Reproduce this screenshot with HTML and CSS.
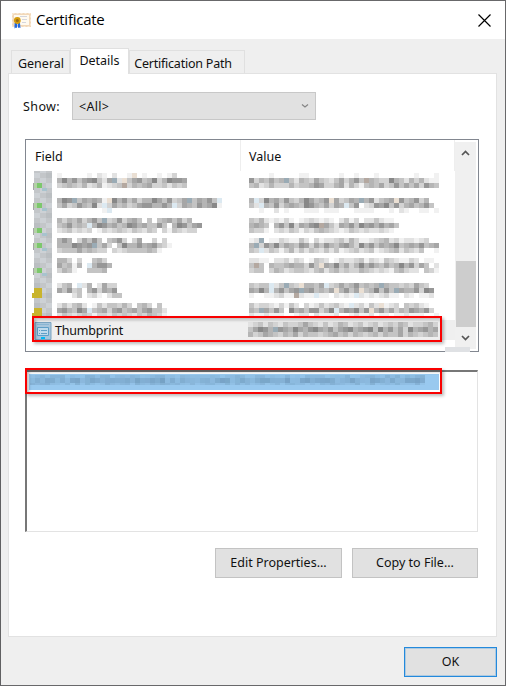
FILE: index.html
```html
<!DOCTYPE html>
<html lang="en">
<head>
<meta charset="utf-8">
<title>Certificate</title>
<link rel="stylesheet" href="styles.css">
</head>
<body>
<div class="window">
  <header class="titlebar">
    <svg class="cert-icon" width="20" height="17" viewBox="0 0 20 17"><path fill="#f2d8b9" d="M1 1h19v14H1z"/><path fill="#fffaf0" d="M3 3h15v10H3z"/><path stroke="#f8ead7" stroke-dasharray="2 2" fill="none" d="M1.500 1.500h18v13h-18z"/><path stroke="#d5d6dd" d="M9 4.500h7M11 7.500h5M11 10.500h4"/><path fill="#2468dc" d="M3.500 11h3l-.5 5-1-.5-1.500 1zM7 11h2l.5 5-1.500-.5-1 .5z"/><circle cx="6.300" cy="8.500" r="3.400" fill="#d49b0c"/><circle cx="6.300" cy="8.500" r="1.500" fill="#976b14"/></svg>
    <span class="title">Certificate</span>
    <svg class="close" width="13" height="13" viewBox="0 0 13 13"><path d="M.5.5l12 12M12.500.5l-12 12" stroke="#000" stroke-width="1.200"/></svg>
  </header>
  <nav class="tabs">
    <div class="tab general"><span>General</span></div>
    <div class="tab active"><span>Details</span></div>
    <div class="tab path"><span>Certification Path</span></div>
  </nav>
  <main class="panel">
    <div class="show"><span class="show-label">Show:</span>
      <div class="select"><span>&lt;All&gt;</span><svg width="8" height="6" viewBox="0 0 8 6"><path d="M1 1.500l3 2.500 3-2.500" fill="none" stroke="#858585" stroke-width="1.200"/></svg></div>
    </div>
    <section class="list">
      <div class="table">
        <div class="head"><div class="field">Field</div><div class="value">Value</div></div>
        <svg class="mosaic" id="fields" width="428" height="149" viewBox="26 171 428 149"></svg>
        <div class="selected">
          <svg class="row-icon" width="18" height="20" viewBox="0 0 18 20"><path fill="#a8c6dc" stroke="#7ba5c2" d="M1 1.500h16v17H1z"/><path fill="#c0dbed" stroke="#5f9fc7" d="M3.500 6.500h11v8h-11z"/><path stroke="#5f9fc7" d="M5 9.500h1M7 9.500h6M5 12.500h1M7 12.500h6"/><path fill="#00b8f4" d="M7 16h4v2H7z"/><path stroke="#8ab6d3" d="M3 3.500h12"/></svg>
          <span class="thumb-text">Thumbprint</span>
          <svg class="mosaic" id="thumb" width="196" height="16" viewBox="249 322 196 16"></svg>
          <div class="mark mark-row"></div>
        </div>
      </div>
      <div class="scroll">
        <svg width="9" height="6" viewBox="0 0 9 6"><path d="M1 5l3.500-3.500L8 5" fill="none" stroke="#555" stroke-width="1.700"/></svg>
        <div class="bar"></div>
        <svg width="9" height="6" viewBox="0 0 9 6"><path d="M1 1l3.500 3.500L8 1" fill="none" stroke="#555" stroke-width="1.700"/></svg>
      </div>
      <div class="smudge"></div>
    </section>
    <section class="detail">
      <div class="selection"><svg class="mosaic" id="detail" width="400" height="16" viewBox="29 374 400 16"></svg></div>
      <div class="mark mark-detail"></div>
    </section>
    <div class="actions"><div class="button edit"><span>Edit Properties...</span></div><div class="button copy"><span>Copy to File...</span></div></div>
  </main>
  <footer class="footer"><div class="button ok"><span>OK</span></div></footer>
</div>
<script src="mosaic.js"></script>
</body>
</html>
```
FILE: styles.css
```css
* { box-sizing: border-box; }
body { margin: 0; width: 506px; height: 686px; overflow: hidden; background: #666; font: 12.5px "Noto Sans", sans-serif; color: #111; }
.window { height: 686px; border: 1px solid #68686a; border-left-color: #606062; background: #efefef; display: flex; flex-direction: column; }
.titlebar { height: 38px; background: #fff; display: flex; align-items: center; padding: 0 14px 2px 10px; flex: none; }
.title { font: 15px/20px "Open Sans", sans-serif; margin-left: 5px; color: #000; letter-spacing: -0.25px; flex: 1; }
.cert-icon { margin-top: 3px; }
.close { margin-top: 2px; }
.tabs { height: 34px; display: flex; align-items: flex-end; padding-left: 10px; flex: none; }
.tab { height: 23px; border: 1px solid #e0e0e0; border-bottom: 0; display: flex; align-items: center; justify-content: center; white-space: nowrap; }
.general { width: 59px; padding: 2px 0 0 1px; }
.active { width: 59px; height: 26px; background: #fff; margin-bottom: -1px; padding-bottom: 2px; position: relative; z-index: 1; }
.path { width: 116px; padding: 2px 8px 0 0; letter-spacing: -0.22px; }
.panel { width: 489px; height: 564px; margin-left: 7px; padding: 18px 18px 0 16px; border: 1px solid #e2e2e2; background: #fff; flex: none; }
.show { height: 28px; display: flex; align-items: center; }
.show-label { width: 47px; text-indent: -2px; letter-spacing: 0.4px; }
.select { width: 244px; height: 28px; border: 1px solid #c8c8c8; background: #e1e1e1; display: flex; align-items: center; justify-content: space-between; padding: 0 6px; }
.select span { letter-spacing: 0.3px; }
.list { position: relative; width: 454px; height: 213px; margin-top: 19px; border: 1px solid #828790; display: flex; }
.table { width: 429px; }
.head { height: 31px; display: flex; line-height: 33px; }
.field { width: 215px; padding-left: 9px; border-right: 1px solid #eee; }
.value { width: 214px; padding-left: 8px; border-right: 1px solid #eee; }
.mosaic { display: block; shape-rendering: crispEdges; }
.selected { position: relative; height: 20px; background: #efefef; display: flex; align-items: center; margin-left: 8px; }
.thumb-text { width: 193px; margin-left: 3px; letter-spacing: -0.2px; }
.row-icon { margin-top: 1px; }
.mark { position: absolute; border: 2px solid #f90000; box-shadow: 2px 2px 3px #0004, inset 2px 2px 3px #0004; }
.mark-row { left: -2px; top: -4px; width: 410px; height: 26px; }
.scroll { width: 21px; height: 207px; background: #f0f0f0; display: flex; flex-direction: column; align-items: center; justify-content: space-between; padding: 8px 0 8px; margin-top: 2px; }
.bar { width: 20px; height: 66px; background: #cdcdcd; margin-top: 96px; }
.smudge { position: absolute; left: 419px; bottom: -1px; width: 25px; height: 5px; background: #dfe1e4; }
.detail { position: relative; width: 453px; height: 162px; margin-top: 18px; border: 2px solid #777; border-right: 1px solid #e3e3e3; border-bottom: 1px solid #e3e3e3; padding: 2px; }
.selection { width: 410px; height: 16px; background: #99c9ef; }
.mark-detail { left: -2px; top: -4px; width: 417px; height: 26px; }
.actions { display: flex; gap: 10px; justify-content: flex-end; margin-top: 16px; }
.button { height: 30px; background: #e1e1e1; border: 1px solid #c3c3c3; display: flex; align-items: center; justify-content: center; white-space: nowrap; padding-bottom: 1px; }
.edit { width: 127px; }
.copy { width: 126px; }
.footer { display: flex; justify-content: flex-end; padding: 10px 8px 0 0; }
.ok { width: 93px; border-color: #2389dc; box-shadow: inset 0 0 0 1px #2389dc44; }
```
FILE: mosaic.js
```javascript
// Draws redacted text as 5px blocks. Digits run from dark to light,
// b and t are pale blue and tan, and a space leaves the cell empty.
const tones = { b: '#dce9f1', t: '#eadfd3', n: '#b4a8a0', c: '#9aabb5', g: '#7cc86c', l: '#b2d2a5', y: '#c9b42c', s: '#a8c3ce', i: '#c3c6c9', j: '#cdd1d5', k: '#babec1' };
const colour = c => tones[c] || 'rgb(' + Array(3).fill(121 + Number(c) * 15).join(',') + ')';

function paint(svg, x, y, text, size, height) {
  let out = '';
  [...text].forEach((c, i) => {
    if (c !== ' ') out += `<rect x="${x + i * size}" y="${y}" width="${size}" height="${height}" fill="${colour(c)}"/>`;
  });
  svg.insertAdjacentHTML('beforeend', out);
}

const fields = document.getElementById('fields');
const names = [
  [173, ' 8   9 8 78 7  8t 8  8 869 ', ' 41425321573c7t532541641223', ' 6545647648765n645436657565'],
  [198, ' 412c534348t142536441352653c53425b', ' 536524517b6354653224424b634524318', '          8b       9             '],
  [218, ' 464536425c6526435 5 5435364', ' 542545b412435412435525 412532', ' 7657676 867656756756 6856766'],
  [238, ' 424 63525 5426 63  6 6', ' 4441232c536 51442432568', ' 6555354566 6765555458'],
  [258, ' 446 6  546', ' 35484 b4224', ' 6458 95554'],
  [283, ' 754 b74 7366', ' 35265 426342', ' 9 975 768 755'],
  [303, ' 757547 85755646 546 5', ' 324513b543632543532557', ' 7567656866756567564568']
];
const values = [
  [173, '    8   9 88      8 98   89      8   8', '2645354c574563567536425n45661457464788', '54764666465542366437468545365253536245'],
  [198, '4b61435256413542t36534c427543t254264  ', '57b4526434512453634b52 76231526435425 ', '  8 97 8 9 888 8889 98888  98 78 988 8'],
  [218, '56478786898767878975869775788', '4345 425163421n357342513242435', '5668 767568675456787567677678'],
  [238, '87c988678857968776574688765476877876  ', '4c624153452363524532461425343154342543', '56b75686475756757587657658765475675  8'],
  [258, '7788977686798567986776586785678867988 ', '5n5 4554344625t341536414245354142635 7', '655 645765567547546566456767854677 568'],
  [283, '5655b75c56t4453b6535425454c455656356  ', '3414b42532c325453t4253t541525c3442612 ', '8  887688n788b88 7878b78787688 789887 '],
  [303, '5766786857 687576578b76857t876 56578  ', '45c3525 143522641b423152t425364523426 ', '78878889 87797888799878879889887888  8']
];
for (const [y, ...bands] of names) bands.forEach((s, i) => paint(fields, 52, y + i * 5, s, 5, 5));
for (const [y, ...bands] of values) bands.forEach((s, i) => paint(fields, 249, y + i * 5, s, 5, 5));
// Document icons in the first column, green for extensions, yellow for critical ones.
for (let y = 168, n = 0; y < 318; y += 5, n++) paint(fields, 34, y, ['iji', 'jik', 'iji', 'kij'][n % 4], 6, 5);
for (const y of [183, 203, 228, 243, 268]) {
  paint(fields, 33, y, '3', 1, 7);
  paint(fields, 34, y, 'l', 3, 5);
  paint(fields, 37, y, 'g', 5, 5);
  paint(fields, 42, y + 5, 's', 5, 3);
}
for (const y of [288, 308]) {
  paint(fields, 34, y, 'y', 8, 5);
  paint(fields, 32, y + 5, 'yy', 5, 5);
}
const thumb = document.getElementById('thumb');
paint(thumb, 249, 322, '76575675665356757645765765765645766546', 5, 5);
paint(thumb, 249, 327, '53124c23413421342532143215142536143243', 5, 5);
paint(thumb, 249, 332, '46534564536455654354645654645536456545', 5, 5);

const detail = document.getElementById('detail');
let seed = 9;
for (let row = 0; row < 3; row++) {
  for (let i = 0; i < 79; i++) {
    seed = (seed * 16807) % 2147483647;
    const shade = (seed % 1000) / 1000;
    const alpha = row === 1 ? .12 + shade * .25 : .05 + shade * .18;
    detail.insertAdjacentHTML('beforeend', `<rect x="${30 + i * 5}" y="${[375, 378, 383][row]}" width="5" height="${[3, 5, 2][row]}" fill="#3d607d" opacity="${alpha}"/>`);
  }
}
```
